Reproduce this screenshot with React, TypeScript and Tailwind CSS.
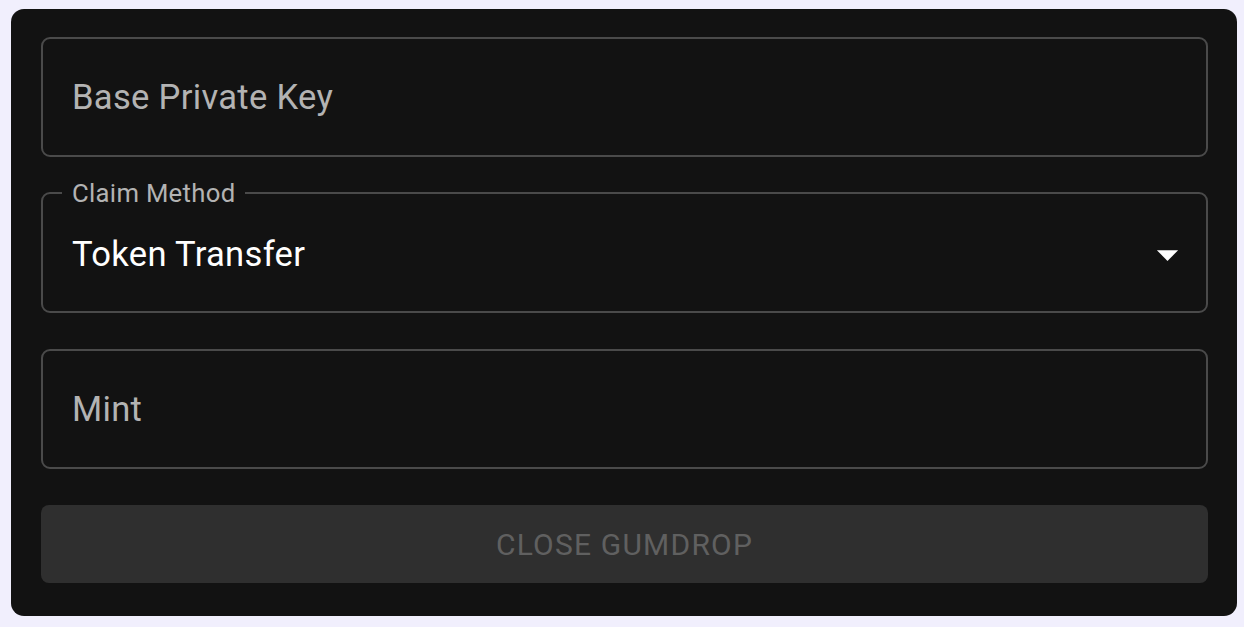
import React from "react";

const font = { fontFamily: "Roboto, 'Liberation Sans', sans-serif" };

const TextField = ({ placeholder }: { placeholder: string }) => (
  <div className="h-[120px] rounded-[9px] border-2 border-[#4a4a4a] flex items-center px-[29px] pt-[2px]">
    <span className="text-[34.6px] tracking-[0.3px] text-[#b3b3b3]">{placeholder}</span>
  </div>
);

const SelectField = ({ label, value }: { label: string; value: string }) => (
  <div className="relative h-[120px]">
    <fieldset className="absolute inset-0 -top-[12px] rounded-[9px] border-2 border-[#4a4a4a] px-[19px] m-0">
      <legend className="px-[10px] text-[25.7px] leading-[24px] tracking-[0.3px] invisible">
        {label}
      </legend>
    </fieldset>
    <span className="absolute left-[31px] -top-[15px] text-[25.7px] leading-[30px] tracking-[0.3px] text-[#b3b3b3]">
      {label}
    </span>
    <div className="relative h-full flex items-center justify-between pl-[31px] pr-[15px] pt-[3px]">
      <span className="text-[34.6px] tracking-[0.3px] text-white">{value}</span>
      <svg width="51" height="51" viewBox="0 0 24 24" fill="white">
        <path d="M7 10l5 5 5-5z" />
      </svg>
    </div>
  </div>
);

export default function App() {
  return (
    <div className="min-h-screen bg-[#f1effd] pl-[11px] pt-[9px]" style={font}>
      <div className="w-[1226px] h-[607px] bg-[#121212] rounded-[13px] pl-[30px] pr-[29px] pt-[28px] flex flex-col">
        <TextField placeholder="Base Private Key" />
        <div className="mt-[36px]">
          <SelectField label="Claim Method" value="Token Transfer" />
        </div>
        <div className="mt-[36px]">
          <TextField placeholder="Mint" />
        </div>
        <button
          disabled
          className="mt-[36px] h-[78px] w-full rounded-[8px] bg-[#2f2f2f] text-[30px] font-normal tracking-[1.2px] uppercase text-[#606060]"
        >
          Close Gumdrop
        </button>
      </div>
    </div>
  );
}
